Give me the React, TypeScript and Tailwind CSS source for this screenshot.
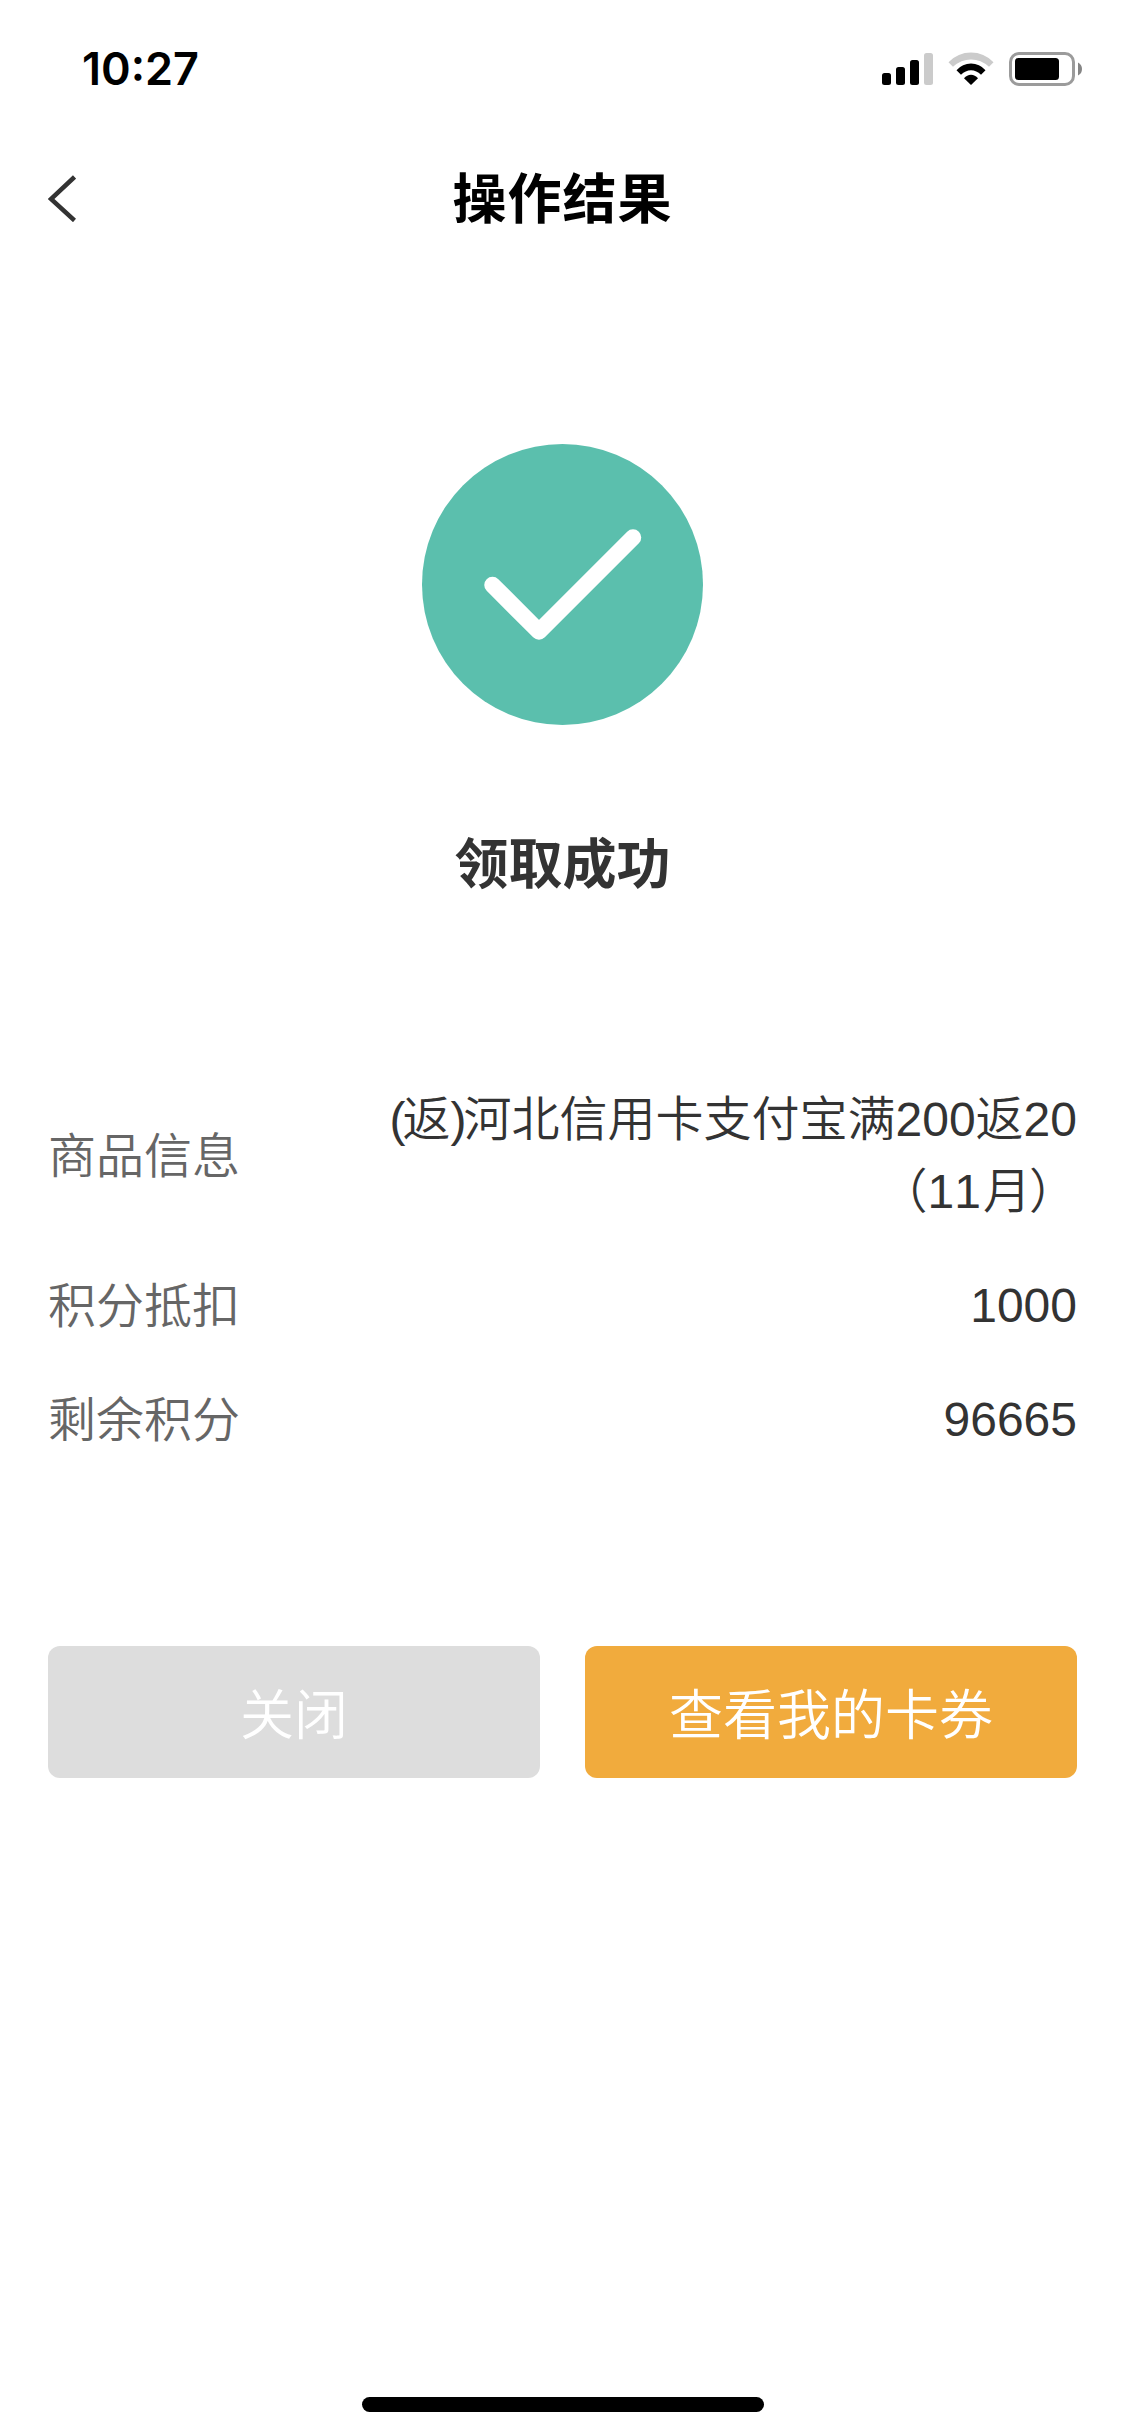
import type { ReactNode } from 'react';

interface InfoRow {
  label: string;
  value: ReactNode;
}

const rows: InfoRow[] = [
  {
    label: '商品信息',
    value: (
      <>
        <span className="tracking-[-3px]">(</span>返<span className="tracking-[-3px]">)</span>河北信用卡支付宝满200返20
        <br />
        （11<span className="-mr-0.5 ml-0.5">月</span>）
      </>
    ),
  },
  { label: '积分抵扣', value: '1000' },
  { label: '剩余积分', value: '96665' },
];

function StatusBar() {
  return (
    <div className="flex h-[132px] items-start justify-between pt-[42px] pr-[41px] pl-[82px]">
      <span className="font-['Inter',sans-serif] text-[45px] leading-[54px] font-semibold text-black">10:27</span>
      <div className="flex items-center pt-[10px]">
        <svg className="h-[34px] w-[52px]" viewBox="0 0 52 34">
          <rect x="0" y="21" width="9" height="12" rx="2.5" />
          <rect x="14" y="15" width="9" height="18" rx="2.5" />
          <rect x="28" y="8" width="9" height="25" rx="2.5" />
          <rect x="42" y="1" width="9" height="32" rx="2.5" fill="#cbcbcb" />
        </svg>
        <svg className="ml-[14px] h-[34px] w-[46px]" viewBox="0 0 46 34">
          <path d="M0.5 10.2Q10 0.5 23 0.5T45.5 10.2L41 14.8Q33 7.5 23 7.5T5 14.8Z" fill="#cbcbcb" />
          <path d="M8.5 18.2Q14.5 11.5 23 11.5T37.5 18.2L33 22.8Q28.5 18.2 23 18.2T13 22.8Z" />
          <path d="M16 26.2Q19 22.7 23 22.7T30 26.2L23 33Z" />
        </svg>
        <svg className="ml-[15px] h-[34px] w-[75px]" viewBox="0 0 75 34">
          <rect x="1.5" y="1.5" width="63" height="31" rx="8.5" fill="none" stroke="#9b9b9b" strokeWidth="3" />
          <rect x="6" y="6" width="44" height="22" rx="3.5" />
          <path d="M69 10.5Q73 12.5 73 17T69 23.5Z" fill="#858585" />
        </svg>
      </div>
    </div>
  );
}

function NavBar() {
  return (
    <div className="grid h-[132px] grid-cols-3 items-center px-12">
      <svg className="h-12 w-7" viewBox="0 0 28 48" fill="none" stroke="#333" strokeWidth="4.5">
        <path d="M26.5 3L3 25L26.5 46.5" />
      </svg>
      <h1 className="pt-1 text-center text-[54px] leading-none font-bold tracking-[1px] whitespace-nowrap text-black">操作结果</h1>
    </div>
  );
}

export default function App() {
  return (
    <div className="flex h-[2436px] w-[1125px] flex-col bg-white font-['Liberation_Sans','Noto_Sans_CJK_SC',sans-serif] text-[#333] [font-kerning:none]">
      <StatusBar />
      <NavBar />

      {/* 结果 */}
      <div className="flex flex-col items-center pt-[180px]">
        <svg className="size-[281px]" viewBox="0 0 281 281">
          <circle cx="140.5" cy="140.5" r="140.5" fill="#5bbfad" />
          <path
            d="M70.5 141L117 187.5L211 93.5"
            fill="none"
            stroke="#fff"
            strokeWidth="16.5"
            strokeLinecap="round"
            strokeLinejoin="round"
          />
        </svg>
        <h2 className="mt-[106px] text-[54px] leading-[68px] font-bold">领取成功</h2>
      </div>

      {/* 明细 */}
      <dl className="mt-[185px] flex flex-col gap-[42px] px-12 text-[48px] leading-[72px] font-[350]">
        {rows.map(row => (
          <div key={row.label} className="flex items-center justify-between">
            <dt className="translate-y-px text-[#666]">{row.label}</dt>
            <dd className="text-right whitespace-nowrap">{row.value}</dd>
          </div>
        ))}
      </dl>

      {/* 按钮 */}
      <div className="mt-[190px] grid grid-cols-2 gap-[45px] px-12 text-[54px] font-[350] text-white">
        <button className="h-[132px] rounded-xl bg-[#ddd] pt-2">关闭</button>
        <button className="h-[132px] rounded-xl bg-[#f1ab3d] pt-2">查看我的卡券</button>
      </div>

      <div className="mx-auto mt-auto mb-6 h-[15px] w-[402px] rounded-full bg-black" />
    </div>
  );
}
